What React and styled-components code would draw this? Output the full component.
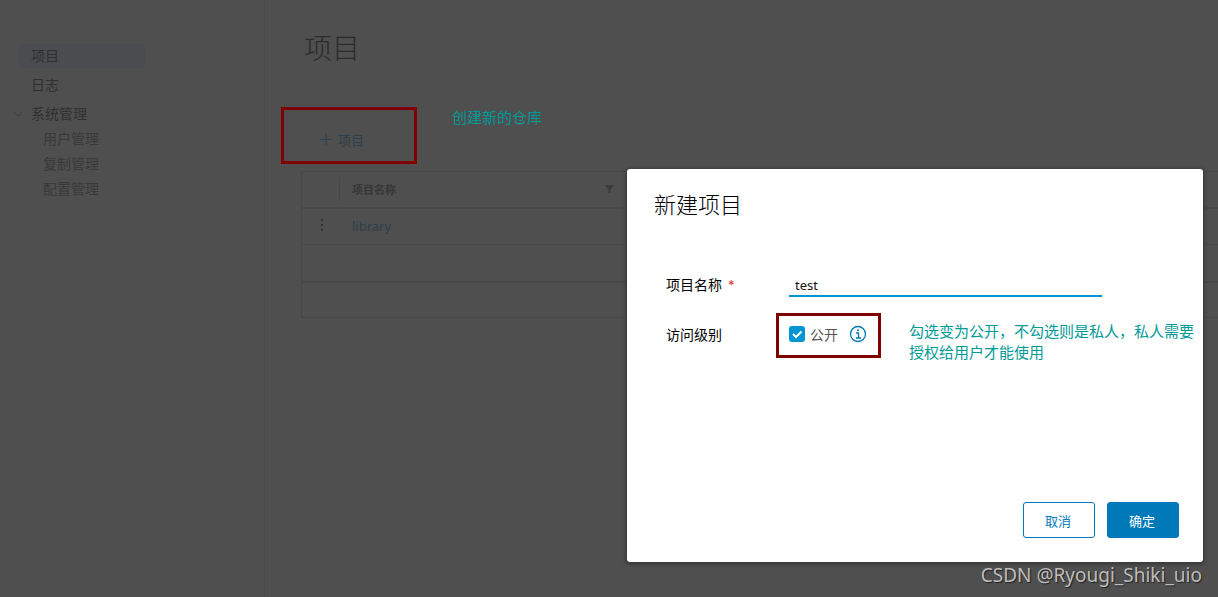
import React from "react";
import styled, { createGlobalStyle, css } from "styled-components";

const cjk = `"Noto Sans CJK SC", sans-serif`;

const Global = createGlobalStyle`
  * { box-sizing: border-box; }
  body {
    margin: 0;
    background: #4f4f4f;
    color: #303030;
    font: 14px/22px ${cjk};
    overflow: hidden;
  }
  h1, h2, p, ul { margin: 0; padding: 0; }
  ul { list-style: none; }
  a { color: inherit; text-decoration: none; }
  button, input { font-family: inherit; }
`;

const Page = styled.div`
  position: relative;
  display: flex;
  min-height: 100vh;
`;

const Sidebar = styled.nav`
  flex: none;
  width: 265px;
  padding: 44px 0 0 19px;
  border-right: 1px solid #484848;
`;

const NavList = styled.ul`
  display: flex;
  flex-direction: column;
  gap: 5px;
`;

const SubList = styled.ul`
  padding: 1px 0 0 12px;
`;

const NavLink = styled.a`
  display: block;
  width: 126px;
  height: 24px;
  padding-left: 12px;
  border-radius: 3px;
  ${(p) => p.$active && css`background: #4a4c4f;`}
`;

const SubLink = styled(NavLink)`
  height: 25px;
  line-height: 23px;
  color: #393939;
`;

const GroupRow = styled.div`
  position: relative;
`;

const Caret = styled.svg`
  position: absolute;
  left: -6px;
  top: 8px;
`;

const Main = styled.main`
  flex: 1;
  min-width: 0;
  padding: 27px 0 0 36px;
`;

const Title = styled.h1`
  padding-left: 3px;
  font-size: 28px;
  line-height: 40px;
  font-weight: 300;
  color: #2b2b2b;
`;

const Toolbar = styled.div`
  padding: 59px 0 19px 18px;
`;

const AddButton = styled.button`
  display: flex;
  align-items: center;
  gap: 5px;
  height: 26px;
  padding: 0;
  border: 0;
  background: none;
  color: #2d3f4a;
  font-size: 13px;
`;

const Grid = styled.table`
  width: 100%;
  table-layout: fixed;
  border-collapse: separate;
  border-spacing: 0;
  border: 1px solid #474747;
  border-right: 0;
  border-radius: 3px 0 0 3px;
`;

const Cell = styled.td`
  height: ${(p) => p.$height || 36}px;
  padding: 0 0 0 12px;
  text-align: left;
  line-height: 20px;
  border-bottom: ${(p) => p.$line || 0}px solid #484848;
`;

const HeadCell = styled(Cell)`
  padding-bottom: 2px;
  font-size: 11px;
  font-weight: 700;
  color: #373737;
`;

const HeadContent = styled.div`
  display: flex;
  align-items: center;
  justify-content: space-between;
  padding-right: 13px;
`;

const Divider = styled.div`
  height: 24px;
  border-right: 1px solid #474747;
`;

const ProjectLink = styled.a`
  display: block;
  padding-bottom: 2px;
  color: #2d3f4a;
  font: 13px/20px "Noto Sans", ${cjk};
`;

const KebabButton = styled.button`
  display: block;
  padding: 0 0 0 6px;
  border: 0;
  background: none;
`;

const Overlay = styled.div`
  position: absolute;
  inset: 0;
  display: flex;
  justify-content: flex-end;
  align-items: flex-start;
  padding: 169px 15px 0 0;
`;

const Dialog = styled.section`
  display: flex;
  flex-direction: column;
  width: 576px;
  padding: 18px 24px 24px 27px;
  border-radius: 3px;
  background: #fff;
  color: #000;
  box-shadow: 0 1px 3px 2px #3d3d3d;
`;

const DialogTitle = styled.h2`
  font-size: 22px;
  line-height: 32px;
  font-weight: 300;
`;

const Form = styled.form`
  display: flex;
  flex-direction: column;
  gap: 14px;
  padding: 52px 0 0 12px;
`;

const Field = styled.div`
  display: flex;
  align-items: center;
  height: ${(p) => p.$height}px;
`;

const Label = styled.label`
  width: 123px;
  padding-bottom: 3px;
`;

const Required = styled.span`
  margin-left: 6px;
  color: #e0351b;
  font: 13px/20px Inter, sans-serif;
`;

const TextInput = styled.input`
  width: 313px;
  height: 24px;
  padding: 2px 6px 0;
  border: 0;
  border-bottom: 2px solid #0095d3;
  outline: 0;
  background: none;
  color: #111;
  font: 13px/20px "Noto Sans", ${cjk};
`;

const PublicBox = styled.div`
  display: flex;
  align-items: center;
  width: 105px;
  height: 45px;
  margin-left: -13px;
  padding: 0 10px 4px;
  border: 3px solid #800000;
  color: #565656;
`;

const Check = styled.input`
  appearance: none;
  width: 16px;
  height: 16px;
  margin: 0 5px 0 0;
  border-radius: 3px;
  background: #0095d3;
`;

const CheckWrap = styled.label`
  position: relative;
  display: flex;
  align-items: center;
`;

const Tick = styled.svg`
  position: absolute;
  left: 0;
  top: 3px;
  pointer-events: none;
`;

const InfoIcon = styled.svg`
  margin-left: 11px;
`;

const Note = styled.p`
  color: #009a96;
  font-size: 15px;
  line-height: 21px;
`;

const FieldNote = styled(Note)`
  flex: none;
  width: 288px;
  margin: 10px -20px 0 28px;
`;

const ToolbarNote = styled(Note)`
  position: absolute;
  left: 452px;
  top: 106px;
`;

const Marker = styled.div`
  position: absolute;
  left: 281px;
  top: 107px;
  width: 136px;
  height: 57px;
  border: 3px solid #800000;
  pointer-events: none;
`;

const Actions = styled.footer`
  display: flex;
  justify-content: flex-end;
  gap: 12px;
  padding-top: 144px;
`;

const Button = styled.button`
  width: 72px;
  height: 36px;
  padding: 0 2px 0 0;
  border: 1px solid #0079b8;
  border-radius: 3px;
  background: ${(p) => (p.$primary ? "#0079b8" : "#fff")};
  color: ${(p) => (p.$primary ? "#fff" : "#0079b8")};
  font-size: 13px;
`;

const Watermark = styled.div`
  position: absolute;
  right: 16px;
  bottom: 8px;
  color: #bdbdbd;
  font: 19px/28px "Noto Sans", sans-serif;
  text-shadow: 1px 1px 1px #222;
`;

export default function App() {
  return (
    <Page>
      <Global />
      <Sidebar>
        <NavList>
          <li><NavLink href="#projects" $active>项目</NavLink></li>
          <li><NavLink href="#logs">日志</NavLink></li>
          <li>
            <GroupRow>
              <Caret width="10" height="8" viewBox="0 0 10 8" fill="none" stroke="#3c3c3c">
                <path d="M1 2l4 4 4-4" />
              </Caret>
              <NavLink href="#admin">系统管理</NavLink>
            </GroupRow>
            <SubList>
              <li><SubLink href="#users">用户管理</SubLink></li>
              <li><SubLink href="#replication">复制管理</SubLink></li>
              <li><SubLink href="#config">配置管理</SubLink></li>
            </SubList>
          </li>
        </NavList>
      </Sidebar>
      <Main>
        <Title>项目</Title>
        <Toolbar>
          <AddButton type="button">
            <svg width="14" height="14" viewBox="0 0 14 14" stroke="#2d3f4a" fill="none">
              <path d="M1 7.500h12M7 1v12" />
            </svg>
            项目
          </AddButton>
        </Toolbar>
        <Grid>
          <colgroup>
            <col width="38" />
            <col width="287" />
            <col />
          </colgroup>
          <thead>
            <tr>
              <HeadCell as="th" $line={2} $height={37}><Divider /></HeadCell>
              <HeadCell as="th" $line={2} $height={37}>
                <HeadContent>
                  项目名称
                  <svg width="9" height="9" viewBox="0 0 9 9" fill="#3a3a3a">
                    <path d="M0 1h9L5.500 5v4h-2V5z" />
                  </svg>
                </HeadContent>
              </HeadCell>
              <HeadCell as="th" $line={2} $height={37} />
            </tr>
          </thead>
          <tbody>
            <tr>
              <Cell $line={1}>
                <KebabButton type="button" aria-label="操作">
                  <svg width="4" height="14" viewBox="0 0 4 14" fill="#333">
                    <path d="M1 1h2v2H1zM1 6h2v2H1zM1 11h2v2H1z" />
                  </svg>
                </KebabButton>
              </Cell>
              <Cell $line={1}><ProjectLink href="#library">library</ProjectLink></Cell>
              <Cell $line={1} />
            </tr>
            <tr><Cell colSpan={3} $line={2} $height={38} /></tr>
          </tbody>
          <tfoot>
            <tr><Cell colSpan={3} $height={34} /></tr>
          </tfoot>
        </Grid>
      </Main>
      <Marker />
      <ToolbarNote>创建新的仓库</ToolbarNote>
      <Overlay>
        <Dialog role="dialog" aria-labelledby="dialog-title">
          <DialogTitle id="dialog-title">新建项目</DialogTitle>
          <Form>
            <Field $height={28}>
              <Label htmlFor="name">项目名称<Required>*</Required></Label>
              <TextInput id="name" defaultValue="test" />
            </Field>
            <Field $height={45}>
              <Label htmlFor="public">访问级别</Label>
              <PublicBox>
                <CheckWrap>
                  <Check id="public" type="checkbox" defaultChecked />
                  <Tick width="16" height="16" viewBox="0 0 16 16" fill="none" stroke="#fff" strokeWidth="2">
                    <path d="M4 8l3 3 5.500-5.500" />
                  </Tick>
                  公开
                </CheckWrap>
                <InfoIcon width="18" height="18" viewBox="0 0 18 18" fill="none" stroke="#0079b8">
                  <circle cx="9" cy="9" r="7.500" strokeWidth="1.300" />
                  <path d="M7 8h2.500v5M7 13h5" strokeWidth="1.300" />
                  <circle cx="9" cy="5.300" r="1" fill="#0079b8" stroke="none" />
                </InfoIcon>
              </PublicBox>
              <FieldNote>勾选变为公开，不勾选则是私人，私人需要授权给用户才能使用</FieldNote>
            </Field>
          </Form>
          <Actions>
            <Button type="button">取消</Button>
            <Button type="button" $primary>确定</Button>
          </Actions>
        </Dialog>
      </Overlay>
      <Watermark>CSDN @Ryougi_Shiki_uio</Watermark>
    </Page>
  );
}
